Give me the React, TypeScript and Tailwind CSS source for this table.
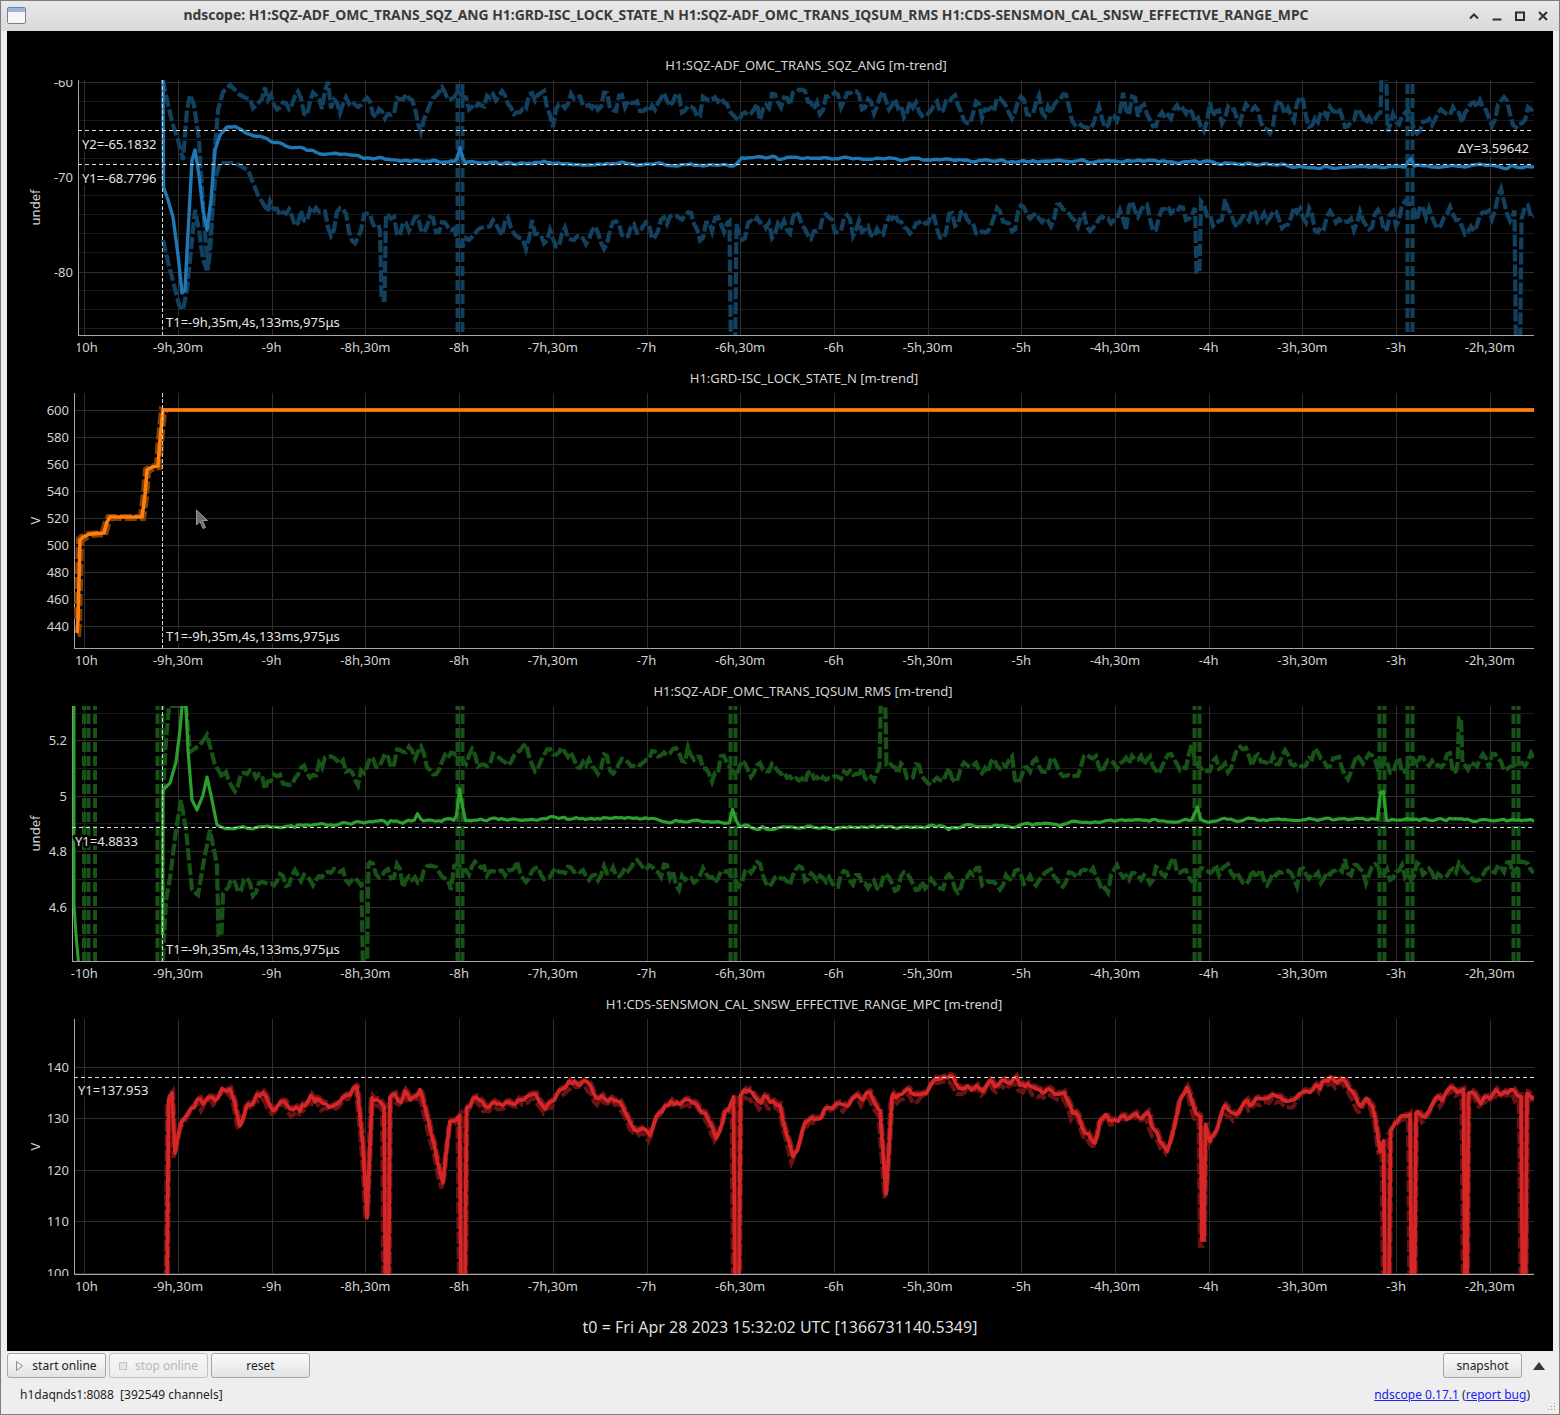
import React from "react";

type P = [number, number];
type Spike = { x: number; to: number; to2?: number; w?: number };

const R = 1534;
const FONT = "'Noto Sans', sans-serif";
const TICKS = ["-10h", "-9h,30m", "-9h", "-8h,30m", "-8h", "-7h,30m", "-7h", "-6h,30m", "-6h", "-5h,30m", "-5h", "-4h,30m", "-4h", "-3h,30m", "-3h", "-2h,30m"];
const tx = (i: number) => 84.3 + i * 93.7;
const DASH = "12 3";

const BLUE = "#1f77b4";
const BLUE_D = "#12405f";
const ORANGE = "#ff7f0e";
const ORANGE_D = "#7f3f07";
const GREEN = "#2ca02c";
const GREEN_D = "#175217";
const RED = "#d62728";
const RED_D = "#6b1314";

const mulberry = (seed: number) => {
  let a = seed >>> 0;
  return () => {
    a = (a + 0x6d2b79f5) >>> 0;
    let t = a;
    t = Math.imul(t ^ (t >>> 15), t | 1);
    t ^= t + Math.imul(t ^ (t >>> 7), t | 61);
    return ((t ^ (t >>> 14)) >>> 0) / 4294967296;
  };
};

const lerp = (pts: P[], x: number) => {
  if (x <= pts[0][0]) return pts[0][1];
  for (let i = 1; i < pts.length; i++) {
    if (x <= pts[i][0]) {
      const [x0, y0] = pts[i - 1];
      const [x1, y1] = pts[i];
      return x1 === x0 ? y1 : y0 + ((y1 - y0) * (x - x0)) / (x1 - x0);
    }
  }
  return pts[pts.length - 1][1];
};

// mean-reverting wiggle, sampled every 3px
const jitter = (seed: number, k: number, amp: number) => {
  const r = mulberry(seed);
  const a: number[] = [];
  let v = 0;
  for (let i = 0; i < 560; i++) {
    v = k * v + (r() * 2 - 1) * amp;
    const kick = r() < 0.06 ? (r() * 2 - 1) * amp * 1.8 : 0;
    a.push(v + kick);
  }
  return (x: number) => {
    const f = Math.max(0, x / 3);
    const i = Math.min(a.length - 2, Math.floor(f));
    const t = f - i;
    return a[i] * (1 - t) + a[i + 1] * t;
  };
};

const tri = (x: number, list: [number, number, number][]) =>
  list.reduce((s, [c, h, w]) => s + h * Math.max(0, 1 - Math.abs(x - c) / w), 0);

const build = (x0: number, x1: number, f: (x: number) => number, spikes: Spike[] = [], extra: number[] = []) => {
  const near = (x: number) => spikes.some((s) => Math.abs(x - s.x) <= (s.w ?? 2) / 2 + 1.5);
  const pts: P[] = [];
  for (let x = x0; x <= x1; x += 3) if (!near(x)) pts.push([x, f(x)]);
  pts.push([x1, f(x1)]);
  extra.forEach((x) => {
    if (x >= x0 && x <= x1 && !near(x)) pts.push([x, f(x)]);
  });
  spikes.forEach((s) => {
    const h = (s.w ?? 2) / 2;
    pts.push([s.x - h - 1.5, f(s.x - h - 1.5)], [s.x - h, s.to], [s.x + h, s.to2 ?? s.to], [s.x + h + 1.5, f(s.x + h + 1.5)]);
  });
  return pts.filter((p) => p[0] >= x0 && p[0] <= x1).sort((a, b) => a[0] - b[0]);
};

const toPath = (pts: P[]) => pts.map((p, i) => (i ? "L" : "M") + p[0].toFixed(1) + " " + p[1].toFixed(1)).join("");
const pairs = (xs: number[], y0: number, y1: number) => xs.map((x) => `M${x - 2.5} ${y0}V${y1}M${x + 2.5} ${y0}V${y1}`).join("");

// ---- plot 1: SQZ ANG ----
const P1MT: P[] = [[163, 80], [163.5, 187], [168, 200], [173, 217], [178, 255], [182, 293], [185, 290], [189, 215], [192, 160], [195, 150], [199, 175], [203, 210], [207, 230], [211, 200], [215, 150], [220, 135], [227, 127], [235, 127]];
const P1MO: P[] = [[235, 0], [500, 2], [735, 3], [742, -4], [900, -3], [1000, -1], [1200, 0], [1320, 5], [1534, 4]];
const P1XT: P[] = [[163, 80], [168, 105], [173, 125], [178, 140], [183, 160], [187, 110], [190, 95], [194, 105], [199, 140], [204, 220], [208, 270], [211, 240], [214, 160], [218, 110], [223, 92], [230, 85], [240, 95], [250, 100]];
const P1XB: P[] = [[250, 100], [400, 105], [600, 102], [900, 105], [1100, 112], [1250, 115], [1400, 118], [1534, 112]];
const P1NT: P[] = [[163, 240], [168, 262], [174, 285], [179, 305], [183, 310], [187, 290], [191, 250], [195, 210], [199, 230], [203, 260], [207, 270], [211, 230], [215, 180], [220, 163], [235, 163], [248, 170], [258, 195], [270, 215]];
const P1NB: P[] = [[270, 215], [400, 225], [520, 235], [700, 228], [900, 225], [1100, 215], [1300, 220], [1534, 215]];
const n1m = jitter(11, 0.5, 1.3);
const n1a = jitter(12, 0.35, 15);
const n1b = jitter(13, 0.35, 15);
const p1Mean = build(163, R, (x) => (x < 235 ? lerp(P1MT, x) : 162 - 35 * Math.exp(-(x - 235) / 70) + lerp(P1MO, x) + n1m(x) - tri(x, [[460, 15, 4], [1410, 11, 4]])), [], P1MT.map((p) => p[0]));
const p1Max = build(163, R, (x) => (x < 250 ? lerp(P1XT, x) : lerp(P1XB, x) + n1a(x)), [{ x: 1384, to: 60, w: 4 }], P1XT.map((p) => p[0]));
const p1Min = build(163, R, (x) => (x < 270 ? lerp(P1NT, x) : lerp(P1NB, x) + n1b(x)), [{ x: 383, to: 300, w: 3 }, { x: 733, to: 360, w: 4 }, { x: 1198, to: 272, w: 3 }, { x: 1518, to: 360, w: 4 }], P1NT.map((p) => p[0]));

// ---- plot 2: guardian state ----
const P2: P[] = [[77, 633], [78, 620], [80, 540], [83, 537], [90, 534], [104, 533], [107, 522], [110, 517], [142, 517], [145, 495], [147, 470], [152, 467], [158, 466], [160, 440], [163, 410]];
const p2Mean = build(77, R, (x) => (x < 163 ? lerp(P2, x) : 410), [], P2.map((p) => p[0]));
const p2Max = build(76, R, (x) => (x < 163 ? lerp(P2, x + 2) - 1 : 410), [], P2.map((p) => p[0] - 2));
const p2Min = build(78, R, (x) => (x < 166 ? lerp(P2, x - 2) + 2 : 410), [], P2.map((p) => p[0] + 2));

// ---- plot 3: IQSUM RMS ----
const P3MT: P[] = [[162.5, 935], [163, 790], [170, 783], [176, 762], [180, 730], [182, 706], [186, 706], [188, 750], [192, 800], [197, 810], [203, 795], [207, 777], [211, 795], [217, 825], [226, 829]];
const P3MB: P[] = [[226, 829], [300, 826], [400, 821], [600, 818], [700, 821], [760, 828], [1000, 826], [1100, 821], [1300, 819], [1534, 820]];
const P3XT: P[] = [[163, 795], [166, 740], [169, 706], [186, 706], [190, 752], [200, 745], [207, 735], [215, 765], [222, 776]];
const P3XB: P[] = [[222, 776], [260, 780], [330, 766], [400, 760], [600, 760], [700, 765], [800, 775], [900, 772], [1000, 770], [1100, 762], [1200, 765], [1300, 758], [1400, 765], [1534, 760]];
const P3NT: P[] = [[163, 960], [166, 900], [170, 878], [176, 830], [181, 800], [186, 830], [192, 890], [198, 895], [204, 860], [210, 830], [216, 860], [222, 895], [230, 885]];
const P3NB: P[] = [[230, 885], [300, 878], [400, 872], [600, 870], [800, 878], [900, 884], [1000, 880], [1100, 872], [1300, 875], [1534, 866]];
const n3m = jitter(31, 0.5, 1.5);
const n3a = jitter(32, 0.35, 12);
const n3b = jitter(33, 0.35, 11);
const p3Mean = build(162.5, R, (x) => (x < 226 ? lerp(P3MT, x) : lerp(P3MB, x) + n3m(x) - tri(x, [[460, 36, 4], [733, 18, 4], [1197, 15, 4], [1382, 44, 4], [418, 7, 4]])), [], P3MT.map((p) => p[0]));
const p3Max = build(163, R, (x) => (x < 222 ? lerp(P3XT, x) : lerp(P3XB, x) + n3a(x)), [{ x: 883, to: 690, w: 4 }, { x: 1460, to: 718, w: 2 }], P3XT.map((p) => p[0]));
const p3Min = build(163, R, (x) => (x < 230 ? lerp(P3NT, x) : lerp(P3NB, x) + n3b(x)), [{ x: 365, to: 975, w: 4 }, { x: 220, to: 935, w: 3 }], P3NT.map((p) => p[0]));

// ---- plot 4: range ----
const P4: P[] = [[167, 1290], [168.5, 1100], [172, 1092], [175, 1150], [180, 1128], [193, 1105], [200, 1098], [213, 1102], [222, 1095], [230, 1085], [235, 1100], [240, 1128], [247, 1110], [253, 1102], [263, 1095], [273, 1108], [285, 1100], [300, 1106], [315, 1098], [333, 1112], [342, 1100], [350, 1092], [357, 1088], [363, 1142], [367, 1222], [372, 1105], [380, 1102], [393, 1098], [405, 1104], [420, 1095], [427, 1122], [433, 1138], [443, 1182], [450, 1122], [457, 1118], [473, 1098], [490, 1105], [510, 1100], [530, 1092], [545, 1108], [560, 1085], [580, 1083], [600, 1098], [620, 1105], [635, 1125], [650, 1132], [665, 1105], [690, 1100], [705, 1110], [716, 1142], [725, 1110], [745, 1088], [760, 1095], [780, 1110], [793, 1162], [805, 1125], [830, 1108], [850, 1100], [870, 1095], [880, 1105], [886, 1188], [892, 1100], [910, 1090], [930, 1088], [950, 1072], [965, 1090], [990, 1085], [1020, 1082], [1045, 1088], [1070, 1100], [1085, 1130], [1095, 1140], [1100, 1120], [1130, 1115], [1150, 1118], [1167, 1150], [1180, 1100], [1187, 1092], [1196, 1110], [1210, 1140], [1225, 1110], [1250, 1105], [1280, 1100], [1300, 1092], [1320, 1085], [1340, 1078], [1360, 1100], [1372, 1105], [1380, 1148], [1395, 1120], [1405, 1118], [1425, 1112], [1450, 1090], [1480, 1098], [1500, 1090], [1534, 1095]];
const S4: Spike[] = [{ x: 387, to: 1292, w: 3 }, { x: 463, to: 1292, w: 4 }, { x: 737, to: 1292, w: 4 }, { x: 1203, to: 1240 }, { x: 1387, to: 1292, w: 4 }, { x: 1413, to: 1292, w: 3 }, { x: 1466, to: 1292 }, { x: 1524, to: 1292, w: 3 }];
const n4 = jitter(41, 0.3, 6);
const n4b = jitter(42, 0.35, 3);
const f4 = (x: number) => lerp(P4, x) + (x < 170 ? 0 : n4(x));
const p4Mean = build(167, R, f4, S4, P4.map((p) => p[0]));
const p4Min = build(165, R, (x) => f4(x + 1.5) + 4 + n4b(x), S4.map((s) => ({ ...s, x: s.x - 2, to: s.to + 6 })), P4.map((p) => p[0] - 1.5));
const p4Max = build(168, R, (x) => f4(x - 1) - 2, S4.map((s) => ({ ...s, x: s.x + 1 })), P4.map((p) => p[0] + 1));

const Dash = ({ pts, color }: { pts: P[]; color: string }) => (
  <path d={toPath(pts)} fill="none" stroke={color} strokeWidth={4.2} strokeDasharray={DASH} />
);
const Solid = ({ pts, color, w = 3 }: { pts: P[]; color: string; w?: number }) => (
  <path d={toPath(pts)} fill="none" stroke={color} strokeWidth={w} strokeLinejoin="round" />
);
const Bars = ({ d, color }: { d: string; color: string }) => <path d={d} stroke={color} strokeWidth={4} strokeDasharray="10 4" />;
const HCur = ({ x, y }: { x: number; y: number }) => <line x1={x} x2={R} y1={y} y2={y} stroke="#dcdcdc" strokeDasharray="4 3" />;
const VCur = ({ x, top }: { x: number; top: number }) => <line x1={x} x2={x} y1={top} y2={top + 255} stroke="#d0d0d0" strokeDasharray="4 2" />;
const Lbl = ({ x, y, t, end }: { x: number; y: number; t: string; end?: boolean }) => (
  <text x={x} y={y} dominantBaseline="central" textAnchor={end ? "end" : "start"} fill="#e4e4e4" stroke="#000" strokeWidth={5} strokeLinejoin="round" paintOrder="stroke">
    {t}
  </text>
);

type PlotProps = {
  id: string;
  title: string;
  pad: string;
  top: number;
  ax: number;
  xclip: number;
  unit: string;
  yt: [string, number][];
  minor?: number[];
  children: React.ReactNode;
};

function Plot({ id, title, pad, top, ax, xclip, unit, yt, minor = [], children }: PlotProps) {
  const bot = top + 255;
  const c = (v: number) => Math.round(v) + 0.5;
  return (
    <div className="flex h-[313px] flex-col">
      <div className={`h-[26px] pr-[19px] text-center text-[13px] leading-[22px] text-[#d4d4d4] ${pad}`}>{title}</div>
      <svg width={1546} height={287} className="block">
        <defs>
          <clipPath id={`plot${id}`}>
            <rect x={ax} y={top} width={R - ax} height={255} />
          </clipPath>
          <clipPath id={`yl${id}`}>
            <rect x={0} y={top - 1} width={ax} height={258} />
          </clipPath>
          <clipPath id={`xl${id}`}>
            <rect x={xclip} y={bot} width={1600} height={40} />
          </clipPath>
        </defs>
        <g transform={`translate(-7 ${-top})`} fontFamily={FONT} fontSize={13}>
          <g stroke="#1a1a1a">
            {minor.map((y) => (
              <line key={y} x1={ax} x2={R} y1={c(y)} y2={c(y)} />
            ))}
          </g>
          <g stroke="#2e2e2e">
            {yt.map(([t, y]) => (
              <line key={t} x1={ax} x2={R} y1={c(y)} y2={c(y)} />
            ))}
            {TICKS.map((t, i) => (
              <line key={t} x1={c(tx(i))} x2={c(tx(i))} y1={top} y2={bot} />
            ))}
          </g>
          <line x1={ax + 0.5} x2={ax + 0.5} y1={top} y2={bot + 1} stroke="#a8a8a8" />
          <line x1={ax} x2={R} y1={bot + 0.5} y2={bot + 0.5} stroke="#a8a8a8" />
          <g clipPath={`url(#plot${id})`}>{children}</g>
          <g clipPath={`url(#yl${id})`} fill="#d2d2d2" textAnchor="end">
            {yt.map(([t, y]) => (
              <text key={t} x={ax - 5} y={y} dominantBaseline="central">
                {t}
              </text>
            ))}
          </g>
          <g clipPath={`url(#xl${id})`} fill="#d2d2d2" textAnchor="middle">
            {TICKS.map((t, i) => (
              <text key={t} x={tx(i)} y={bot + 11.5} dominantBaseline="central">
                {t}
              </text>
            ))}
          </g>
          <text transform={`translate(35 ${top + 127.5}) rotate(-90)`} textAnchor="middle" dominantBaseline="central" fill="#d2d2d2">
            {unit}
          </text>
        </g>
      </svg>
    </div>
  );
}

const minor1 = [-62, -64, -66, -68, -72, -74, -76, -78, -82, -84, -86].map((v) => 81.7 + (-60 - v) * 9.48);
const minor3 = [712.5, 767.7, 823, 879, 934.7];

function TitleBar() {
  return (
    <div className="flex h-[30px] items-center bg-linear-to-b from-[#e8e8e8] to-[#d9d9d9] pb-[1px]">
      <div className="flex w-[29px] items-center pl-[6px]">
        <div className="h-[17px] w-[19px] overflow-hidden rounded-[2px] border border-[#72829a] bg-[#f6f6f6]">
          <div className="h-[4px] bg-[#9db4d6]" />
        </div>
      </div>
      <div className="flex-1 text-center text-[13.9px] font-bold text-[#3a3a3a]">
        ndscope: H1:SQZ-ADF_OMC_TRANS_SQZ_ANG H1:GRD-ISC_LOCK_STATE_N H1:SQZ-ADF_OMC_TRANS_IQSUM_RMS H1:CDS-SENSMON_CAL_SNSW_EFFECTIVE_RANGE_MPC
      </div>
      <div className="flex w-[97px] items-center">
        <div className="flex w-[23px] justify-center">
          <svg width={10} height={10} viewBox="0 0 10 10">
            <polyline points="1,7.5 5,3.5 9,7.5" fill="none" stroke="#2e2e2e" strokeWidth={2} />
          </svg>
        </div>
        <div className="flex w-[23px] justify-center">
          <svg width={10} height={10} viewBox="0 0 10 10">
            <line x1={0.5} x2={9.5} y1={8.5} y2={8.5} stroke="#2e2e2e" strokeWidth={2} />
          </svg>
        </div>
        <div className="flex w-[23px] justify-center">
          <svg width={10} height={10} viewBox="0 0 10 10">
            <rect x={1} y={1.5} width={8} height={7.5} fill="none" stroke="#2e2e2e" strokeWidth={2} />
          </svg>
        </div>
        <div className="flex w-[23px] justify-center">
          <svg width={10} height={10} viewBox="0 0 10 10">
            <path d="M1 1L9 9M9 1L1 9" stroke="#2e2e2e" strokeWidth={2} />
          </svg>
        </div>
      </div>
    </div>
  );
}

export default function App() {
  return (
    <div className="relative box-border flex h-[1415px] w-[1560px] flex-col border border-[#7d7d7d] bg-[#eeeeee] font-['Noto_Sans',sans-serif] text-[#1e1e1e]">
      <TitleBar />
      <div className="flex flex-1 flex-col px-[6px]">
        <div className="flex h-[1320px] flex-col bg-black pt-[23px]">
          <Plot id="1" title="H1:SQZ-ADF_OMC_TRANS_SQZ_ANG [m-trend]" pad="pl-[71px]" top={80} ax={78} xclip={77} unit="undef" yt={[["-60", 81.7], ["-70", 176.7], ["-80", 271.5]]} minor={minor1}>
            <Bars d={pairs([460, 1410], 70, 345)} color={BLUE_D} />
            <Dash pts={p1Max} color={BLUE_D} />
            <Dash pts={p1Min} color={BLUE_D} />
            <Solid pts={p1Mean} color={BLUE} w={3.4} />
            <HCur x={78} y={130.5} />
            <HCur x={78} y={164.5} />
            <VCur x={162.5} top={80} />
            <Lbl x={82} y={144} t="Y2=-65.1832" />
            <Lbl x={82} y={178} t="Y1=-68.7796" />
            <Lbl x={1529} y={148} t="ΔY=3.59642" end />
            <Lbl x={166} y={322} t="T1=-9h,35m,4s,133ms,975μs" />
          </Plot>
          <Plot id="2" title="H1:GRD-ISC_LOCK_STATE_N [m-trend]" pad="pl-[67px]" top={393} ax={74} xclip={76} unit="V" yt={[["600", 410], ["580", 437], ["560", 464], ["540", 491], ["520", 518], ["500", 544.5], ["480", 571.5], ["460", 598.5], ["440", 625.5]]}>
            <Dash pts={p2Max} color={ORANGE_D} />
            <Dash pts={p2Min} color={ORANGE_D} />
            <Solid pts={p2Mean} color={ORANGE} w={3.6} />
            <VCur x={162.5} top={393} />
            <Lbl x={166} y={636} t="T1=-9h,35m,4s,133ms,975μs" />
            <polygon points="196.5,510 196.5,525 200,521.5 203,528.5 205.5,527.5 202.5,520.5 207.5,520.5" fill="#6e6e6e" stroke="#b0b0b0" strokeWidth={0.8} />
          </Plot>
          <Plot id="3" title="H1:SQZ-ADF_OMC_TRANS_IQSUM_RMS [m-trend]" pad="pl-[65px]" top={706} ax={72} xclip={70} unit="undef" yt={[["5.2", 740], ["5", 795.5], ["4.8", 851], ["4.6", 907]]} minor={minor3}>
            <Bars d={"M84 700V970M88.5 700V970M95 700V970" + pairs([160, 460, 733, 1197, 1382, 1410, 1516], 700, 970)} color={GREEN_D} />
            <Dash pts={p3Max} color={GREEN_D} />
            <Dash pts={p3Min} color={GREEN_D} />
            <path d="M74 700L74 905L76 935L79 968" fill="none" stroke={GREEN} strokeWidth={3} />
            <Solid pts={p3Mean} color={GREEN} w={3.2} />
            <HCur x={72} y={827.5} />
            <VCur x={162.5} top={706} />
            <Lbl x={75} y={841} t="Y1=4.8833" />
            <Lbl x={166} y={949} t="T1=-9h,35m,4s,133ms,975μs" />
          </Plot>
          <Plot id="4" title="H1:CDS-SENSMON_CAL_SNSW_EFFECTIVE_RANGE_MPC [m-trend]" pad="pl-[67px]" top={1019} ax={74} xclip={76} unit="V" yt={[["140", 1066.7], ["130", 1118.3], ["120", 1169.5], ["110", 1221], ["100", 1272.7]]}>
            <Dash pts={p4Min} color={RED_D} />
            <Dash pts={p4Max} color={RED_D} />
            <Solid pts={p4Mean} color={RED} w={3.8} />
            <HCur x={74} y={1077.5} />
            <Lbl x={78} y={1090} t="Y1=137.953" />
          </Plot>
          <div className="flex h-[42px] items-center justify-center text-[16px] text-[#dedede]">t0 = Fri Apr 28 2023 15:32:02 UTC [1366731140.5349]</div>
        </div>

        <div className="mt-[2px] flex h-[25px] items-center justify-between">
          <div className="flex gap-[3px]">
            <div className="flex h-[25px] w-[99px] items-center justify-center gap-[9px] rounded-[3px] border border-[#a6a6a6] bg-linear-to-b from-[#fbfbfb] to-[#e3e3e3] text-[12px] text-[#1d1d1d]">
              <svg width={7} height={10} viewBox="0 0 7 10">
                <polygon points="0.5,0.5 6.5,5 0.5,9.5" fill="none" stroke="#8a8a8a" />
              </svg>
              start online
            </div>
            <div className="flex h-[25px] w-[99px] items-center justify-center gap-[8px] rounded-[3px] border border-[#c2c2c2] bg-linear-to-b from-[#f7f7f7] to-[#ececec] text-[12px] text-[#b6b6b6]">
              <svg width={8} height={8} viewBox="0 0 8 8">
                <rect x={0.5} y={0.5} width={7} height={7} fill="#e6e6e6" stroke="#c2c2c2" />
              </svg>
              stop online
            </div>
            <div className="flex h-[25px] w-[99px] items-center justify-center rounded-[3px] border border-[#a6a6a6] bg-linear-to-b from-[#fbfbfb] to-[#e3e3e3] text-[12px] text-[#1d1d1d]">
              reset
            </div>
          </div>
          <div className="flex items-center gap-[11px] pr-[8px]">
            <div className="flex h-[25px] w-[79px] items-center justify-center rounded-[3px] border border-[#a6a6a6] bg-linear-to-b from-[#fbfbfb] to-[#e3e3e3] text-[12px] text-[#1d1d1d]">
              snapshot
            </div>
            <svg width={12} height={8} viewBox="0 0 12 8">
              <polygon points="0,8 6,0 12,8" fill="#363636" />
            </svg>
          </div>
        </div>

        <div className="mt-[3px] flex h-[28px] items-center justify-between pl-[13px] pr-[23px] text-[12px] text-[#1e1e1e]">
          <span className="whitespace-pre">h1daqnds1:8088  [392549 channels]</span>
          <span>
            <span className="text-[#2020f0] underline">ndscope 0.17.1</span> (<span className="text-[#2020f0] underline">report bug</span>)
          </span>
        </div>
      </div>
      <svg className="absolute bottom-[3px] right-[3px]" width={10} height={10} viewBox="0 0 10 10">
        {[[8, 2], [8, 5], [5, 5], [8, 8], [5, 8], [2, 8]].map(([x, y]) => (
          <rect key={`${x}-${y}`} x={x} y={y} width={1} height={1} fill="#9a9a9a" />
        ))}
      </svg>
    </div>
  );
}
